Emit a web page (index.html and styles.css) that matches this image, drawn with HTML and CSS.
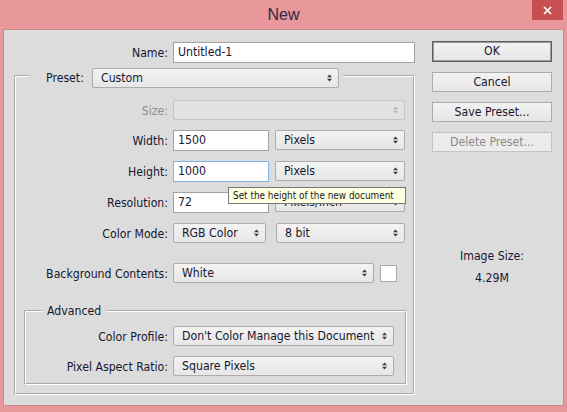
FILE: index.html
```html
<!DOCTYPE html>
<html>
<head>
<meta charset="utf-8">
<title>New</title>
<link rel="stylesheet" href="styles.css">
</head>
<body>
<div class="window">
  <div class="titlebar">
    <span class="title">New</span>
    <div class="close"><svg width="9" height="9" viewBox="0 0 9 9"><path d="M1 1L8 8M8 1L1 8" stroke="#fff" stroke-width="1.7" fill="none"/></svg></div>
  </div>
  <div class="panel">
    <div class="main">
      <div class="row name-row">
        <span class="lbl lbl-top">Name:</span>
        <div class="input w-name">Untitled-1</div>
      </div>
      <fieldset class="group preset">
        <legend class="legend-preset">
          <span class="legend-lbl">Preset:</span>
          <div class="select w-preset"><span class="val">Custom</span><svg class="arr" viewBox="0 0 5 8"><path d="M2.5 0.5L5 3.2H0Z M0 4.8H5L2.5 7.5Z"/></svg></div>
        </legend>
        <div class="rows preset-rows">
          <div class="row size-row">
            <span class="lbl lbl-p off">Size:</span>
            <div class="select off w-size"><span class="val"></span><svg class="arr" viewBox="0 0 5 8"><path d="M2.5 0.5L5 3.2H0Z M0 4.8H5L2.5 7.5Z"/></svg></div>
          </div>
          <div class="row">
            <span class="lbl lbl-p">Width:</span>
            <div class="input w-num">1500</div>
            <div class="select w-unit"><span class="val">Pixels</span><svg class="arr" viewBox="0 0 5 8"><path d="M2.5 0.5L5 3.2H0Z M0 4.8H5L2.5 7.5Z"/></svg></div>
          </div>
          <div class="row tip-row">
            <span class="lbl lbl-p">Height:</span>
            <div class="input focus w-num">1000</div>
            <div class="select w-unit"><span class="val">Pixels</span><svg class="arr" viewBox="0 0 5 8"><path d="M2.5 0.5L5 3.2H0Z M0 4.8H5L2.5 7.5Z"/></svg></div>
            <div class="tooltip">Set the height of the new document</div>
          </div>
          <div class="row">
            <span class="lbl lbl-p">Resolution:</span>
            <div class="input w-num">72</div>
            <div class="select w-unit"><span class="val">Pixels/Inch</span><svg class="arr" viewBox="0 0 5 8"><path d="M2.5 0.5L5 3.2H0Z M0 4.8H5L2.5 7.5Z"/></svg></div>
          </div>
          <div class="row">
            <span class="lbl lbl-p">Color Mode:</span>
            <div class="select w-mode"><span class="val">RGB Color</span><svg class="arr" viewBox="0 0 5 8"><path d="M2.5 0.5L5 3.2H0Z M0 4.8H5L2.5 7.5Z"/></svg></div>
            <div class="select w-bits"><span class="val">8 bit</span><svg class="arr" viewBox="0 0 5 8"><path d="M2.5 0.5L5 3.2H0Z M0 4.8H5L2.5 7.5Z"/></svg></div>
          </div>
          <div class="row bg-row">
            <span class="lbl lbl-p">Background Contents:</span>
            <div class="select w-bg"><span class="val">White</span><svg class="arr" viewBox="0 0 5 8"><path d="M2.5 0.5L5 3.2H0Z M0 4.8H5L2.5 7.5Z"/></svg></div>
            <div class="swatch"></div>
          </div>
        </div>
        <fieldset class="group advanced">
          <legend class="legend-adv">Advanced</legend>
          <div class="rows adv-rows">
            <div class="row">
              <span class="lbl lbl-a">Color Profile:</span>
              <div class="select w-adv"><span class="val">Don't Color Manage this Document</span><svg class="arr" viewBox="0 0 5 8"><path d="M2.5 0.5L5 3.2H0Z M0 4.8H5L2.5 7.5Z"/></svg></div>
            </div>
            <div class="row">
              <span class="lbl lbl-a">Pixel Aspect Ratio:</span>
              <div class="select w-adv"><span class="val">Square Pixels</span><svg class="arr" viewBox="0 0 5 8"><path d="M2.5 0.5L5 3.2H0Z M0 4.8H5L2.5 7.5Z"/></svg></div>
            </div>
          </div>
        </fieldset>
      </fieldset>
    </div>
    <div class="side">
      <div class="btn default">OK</div>
      <div class="btn">Cancel</div>
      <div class="btn">Save Preset...</div>
      <div class="btn off">Delete Preset...</div>
      <div class="info">
        <div class="info-lbl">Image Size:</div>
        <div class="info-val">4.29M</div>
      </div>
    </div>
  </div>
</div>
</body>
</html>
```
FILE: styles.css
```css
* { box-sizing: border-box; }
html, body { margin: 0; padding: 0; }
body {
  width: 567px;
  height: 412px;
  overflow: hidden;
  background: #e8979a;
  font-family: "DejaVu Sans Condensed", "DejaVu Sans", sans-serif;
  font-stretch: condensed;
  font-size: 12.2px;
  color: #17172f;
}
.window { height: 412px; display: flex; flex-direction: column; }

.titlebar {
  height: 29px;
  flex: none;
  display: grid;
  grid-template-columns: 1fr auto 1fr;
}
.title {
  grid-column: 2;
  font-family: "Liberation Sans", sans-serif;
  font-stretch: normal;
  font-size: 16px;
  line-height: 29px;
  color: #2c2c44;
}
.close {
  grid-column: 3;
  justify-self: end;
  align-self: start;
  width: 31px;
  height: 20px;
  margin-right: 4px;
  background: #c75050;
  display: flex;
  align-items: center;
  justify-content: center;
}
.close svg { display: block; }

.panel {
  margin: 0 3px;
  height: 377px;
  background: #dcdcdc;
  border: 1px solid #c88a8d;
  display: flex;
}
.main { width: 416px; flex: none; padding: 12px 0 0 10px; }

.row { display: flex; align-items: flex-start; height: 21px; position: relative; }
.lbl {
  flex: none;
  line-height: 22px;
  text-align: right;
  margin-right: 5px;
  white-space: nowrap;
}
.lbl.off { color: #8e8e8e; }
.lbl-top { width: 154px; }
.lbl-p { width: 152px; }
.lbl-a { width: 142px; }

.input {
  flex: none;
  height: 21px;
  background: #fff;
  border: 1px solid #a3a3a3;
  padding-left: 4px;
  line-height: 19px;
  white-space: nowrap;
}
.input.focus { border-color: #7fb3e6; }

.select {
  flex: none;
  height: 20px;
  display: flex;
  align-items: center;
  justify-content: space-between;
  padding: 0 6px 0 8px;
  border: 1px solid #acacac;
  border-radius: 2px;
  background: linear-gradient(#f3f3f3, #e6e6e6);
  white-space: nowrap;
  line-height: 18px;
}
.select .arr { width: 5px; height: 8px; fill: #3a3a3a; flex: none; }
.select.off { border-color: #c4c4c4; background: #e2e2e2; }
.select.off .arr { fill: #b3b3b3; }

.w-name { width: 242px; }
.w-num { width: 96px; }
.w-unit { width: 130px; margin-left: 6px; }
.w-size { width: 232px; }
.w-mode { width: 93px; }
.w-bits { width: 129px; margin-left: 10px; }
.w-bg { width: 201px; }
.w-adv { width: 221px; }
.w-preset { width: 247px; margin-left: 6px; }

.swatch {
  flex: none;
  width: 17px;
  height: 17px;
  margin: 2px 0 0 6px;
  background: #fff;
  border: 1px solid #a8a8a8;
}

.group {
  margin: 0;
  padding: 0;
  min-inline-size: 0;
  border: 2px groove #ffffff;
}
.preset { width: 401px; margin-top: 5px; padding-bottom: 0; }
.legend-preset {
  height: 16px;
  margin-left: 13px;
  padding: 0 4px 0 17px;
  display: flex;
  align-items: flex-start;
}
.legend-lbl { width: 40px; line-height: 21px; white-space: nowrap; }

.rows { display: flex; flex-direction: column; gap: 10px; }
.preset-rows { padding-top: 16px; }
.size-row { height: 20px; }
.bg-row { margin-top: 9px; }

.advanced { margin: 20px 6px 8px 8px; padding: 0 0 7px 0; }
.legend-adv {
  margin-left: 16px;
  padding: 0 5px;
  line-height: 14px;
  height: 14px;
}
.adv-rows { padding-top: 8px; }
.adv-rows .row { height: 20px; }

.tooltip {
  position: absolute;
  left: 212px;
  top: 26px;
  z-index: 2;
  width: 178px;
  height: 17px;
  background: #ffffe1;
  border: 1px solid #767676;
  font-size: 9.9px;
  line-height: 15px;
  padding-left: 4px;
  white-space: nowrap;
  color: #1a1a1a;
}

.side {
  width: 120px;
  margin-left: 12px;
  padding-top: 11px;
  display: flex;
  flex-direction: column;
}
.btn {
  height: 20px;
  margin-bottom: 10px;
  border: 1px solid #acacac;
  background: linear-gradient(#f2f2f2, #e6e6e6);
  text-align: center;
  line-height: 18px;
  white-space: nowrap;
}
.btn.default {
  height: 21px;
  border: 1px solid #5e5e5e;
  box-shadow: inset 0 0 0 1px #9a9a9a;
  line-height: 19px;
}
.btn.off { color: #8a8a8a; border-color: #c4c4c4; background: #ececec; }
.info { margin-top: 87px; text-align: center; line-height: 14px; }
.info-val { margin-top: 8px; }
```
